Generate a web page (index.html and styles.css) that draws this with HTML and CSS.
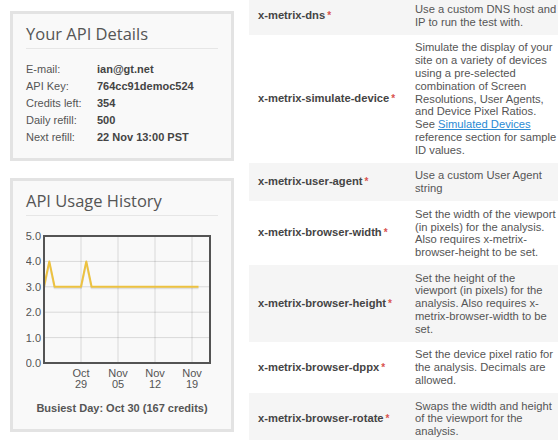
FILE: index.html
```html
<!DOCTYPE html>
<html lang="en">
<head>
  <meta charset="UTF-8" />
  <title>API Details</title>
  <link rel="stylesheet" href="styles.css">
</head>
<body>
  <div class="page">
    <!-- LEFT COLUMN -->
    <aside class="sidebar">
      <div class="panel">
        <h2>Your API Details</h2>
        <dl class="details">
          <dt>E-mail:</dt><dd>ian@gt.net</dd>
          <dt>API Key:</dt><dd>764cc91democ524</dd>
          <dt>Credits left:</dt><dd>354</dd>
          <dt>Daily refill:</dt><dd>500</dd>
          <dt>Next refill:</dt><dd>22 Nov 13:00 PST</dd>
        </dl>
      </div>

      <div class="panel usage">
        <h2>API Usage History</h2>
        <svg class="chart" width="192" height="165" viewBox="0 0 192 165">
          <!-- grid -->
          <g class="grid">
            <line x1="18" y1="33.4" x2="184" y2="33.4"/>
            <line x1="18" y1="58.8" x2="184" y2="58.8"/>
            <line x1="18" y1="84.2" x2="184" y2="84.2"/>
            <line x1="18" y1="109.6" x2="184" y2="109.6"/>
            <line x1="55" y1="8" x2="55" y2="135"/>
            <line x1="92" y1="8" x2="92" y2="135"/>
            <line x1="129" y1="8" x2="129" y2="135"/>
            <line x1="166" y1="8" x2="166" y2="135"/>
          </g>
          <!-- series (with flot-like shadow) -->
          <polyline class="shadow" points="18,60.3 23.3,34.9 28.6,60.3 55,60.3 60.3,34.9 65.6,60.3 172.5,60.3"/>
          <polyline class="series" points="18,58.8 23.3,33.4 28.6,58.8 55,58.8 60.3,33.4 65.6,58.8 172.5,58.8"/>
          <rect class="frame" x="18" y="8" width="166" height="127"/>
          <!-- y axis -->
          <g class="ticks" text-anchor="end">
            <text x="15" y="12">5.0</text>
            <text x="15" y="37.4">4.0</text>
            <text x="15" y="62.8">3.0</text>
            <text x="15" y="88.2">2.0</text>
            <text x="15" y="113.6">1.0</text>
            <text x="15" y="139">0.0</text>
          </g>
          <!-- x axis -->
          <g class="ticks" text-anchor="middle">
            <text x="55" y="149">Oct</text><text x="55" y="160">29</text>
            <text x="92" y="149">Nov</text><text x="92" y="160">05</text>
            <text x="129" y="149">Nov</text><text x="129" y="160">12</text>
            <text x="166" y="149">Nov</text><text x="166" y="160">19</text>
          </g>
        </svg>
        <p class="busiest">Busiest Day: Oct 30 (167 credits)</p>
      </div>
    </aside>

    <!-- HEADERS TABLE -->
    <table class="params">
      <tr>
        <td class="name">x-metrix-dns<span class="req">*</span></td>
        <td class="desc">Use a custom DNS host and IP to run the test with.</td>
      </tr>
      <tr>
        <td class="name">x-metrix-simulate-device<span class="req">*</span></td>
        <td class="desc">Simulate the display of your site on a variety of devices using a pre-selected combination of Screen Resolutions, User Agents, and Device Pixel Ratios. See <a href="#">Simulated Devices</a> reference section for sample ID values.</td>
      </tr>
      <tr>
        <td class="name">x-metrix-user-agent<span class="req">*</span></td>
        <td class="desc">Use a custom User Agent string</td>
      </tr>
      <tr>
        <td class="name">x-metrix-browser-width<span class="req">*</span></td>
        <td class="desc">Set the width of the viewport (in pixels) for the analysis. Also requires x-metrix-browser-height to be set.</td>
      </tr>
      <tr>
        <td class="name">x-metrix-browser-height<span class="req">*</span></td>
        <td class="desc">Set the height of the viewport (in pixels) for the analysis. Also requires x-metrix-browser-width to be set.</td>
      </tr>
      <tr>
        <td class="name">x-metrix-browser-dppx<span class="req">*</span></td>
        <td class="desc">Set the device pixel ratio for the analysis. Decimals are allowed.</td>
      </tr>
      <tr>
        <td class="name">x-metrix-browser-rotate<span class="req">*</span></td>
        <td class="desc">Swaps the width and height of the viewport for the analysis.</td>
      </tr>
    </table>
  </div>
</body>
</html>
```

FILE: styles.css
```css
/* ------------------------------------------------------------
   GLOBAL
------------------------------------------------------------ */
* {
  margin: 0;
  padding: 0;
  box-sizing: border-box;
}
body {
  font-family: "Liberation Sans", Arial, sans-serif;
  background: #fff;
  color: #555;
  overflow: hidden;
}
.page {
  display: flex;
  align-items: flex-start;
}

/* ------------------------------------------------------------
   LEFT PANELS
------------------------------------------------------------ */
.sidebar {
  width: 234px;
  padding: 11px 0 0 10px;
  flex-shrink: 0;
}
.panel {
  background: #f9f9f9;
  border: 3px solid #e3e3e3;
  padding: 10px 13px 12px 13px;
}
.panel + .panel {
  margin-top: 17px;
}
.panel h2 {
  font-family: "Open Sans", sans-serif;
  font-weight: normal;
  font-size: 16.5px;
  line-height: 20px;
  color: #555;
  padding-bottom: 4px;
  border-bottom: 1px solid #e6e6e6;
  margin-bottom: 12px;
}
.details {
  display: grid;
  grid-template-columns: 71px 1fr;
  font-size: 11px;
  line-height: 17px;
}
.details dt {
  color: #555;
}
.details dd {
  color: #444;
  font-weight: bold;
}

/* chart */
.chart {
  display: block;
}
.chart .grid line {
  stroke: rgba(0, 0, 0, 0.13);
  stroke-width: 1;
}
.chart .frame {
  fill: none;
  stroke: #545454;
  stroke-width: 2;
}
.chart .series {
  fill: none;
  stroke: #edc240;
  stroke-width: 2;
  stroke-linejoin: round;
}
.chart .shadow {
  fill: none;
  stroke: rgba(0, 0, 0, 0.1);
  stroke-width: 2;
  stroke-linejoin: round;
}
.chart .ticks text {
  font-family: "Liberation Sans", Arial, sans-serif;
  font-size: 11px;
  fill: #545454;
}
.busiest {
  margin-top: 7px;
  font-size: 11px;
  line-height: 17px;
  font-weight: bold;
  color: #555;
  text-align: center;
}

/* ------------------------------------------------------------
   PARAMETER TABLE
------------------------------------------------------------ */
.params {
  margin-left: 15px;
  margin-top: -3.4px;
  border-collapse: collapse;
  width: 309px;
  flex-shrink: 0;
}
.params tr:nth-child(odd) {
  background: #f5f5f5;
}
.params td {
  padding: 6.4px 0;
  vertical-align: middle;
  font-size: 11.2px;
  line-height: 12.8px;
}
.params .name {
  width: 158px;
  padding-left: 9px;
  font-weight: bold;
  color: #444;
}
.params .req {
  color: #d9534f;
  margin-left: 2px;
  font-size: 10px;
}
.params .desc {
  width: 151px;
  padding-left: 8px;
  color: #555;
}
.params .desc a {
  color: #2a8ad4;
}
```
